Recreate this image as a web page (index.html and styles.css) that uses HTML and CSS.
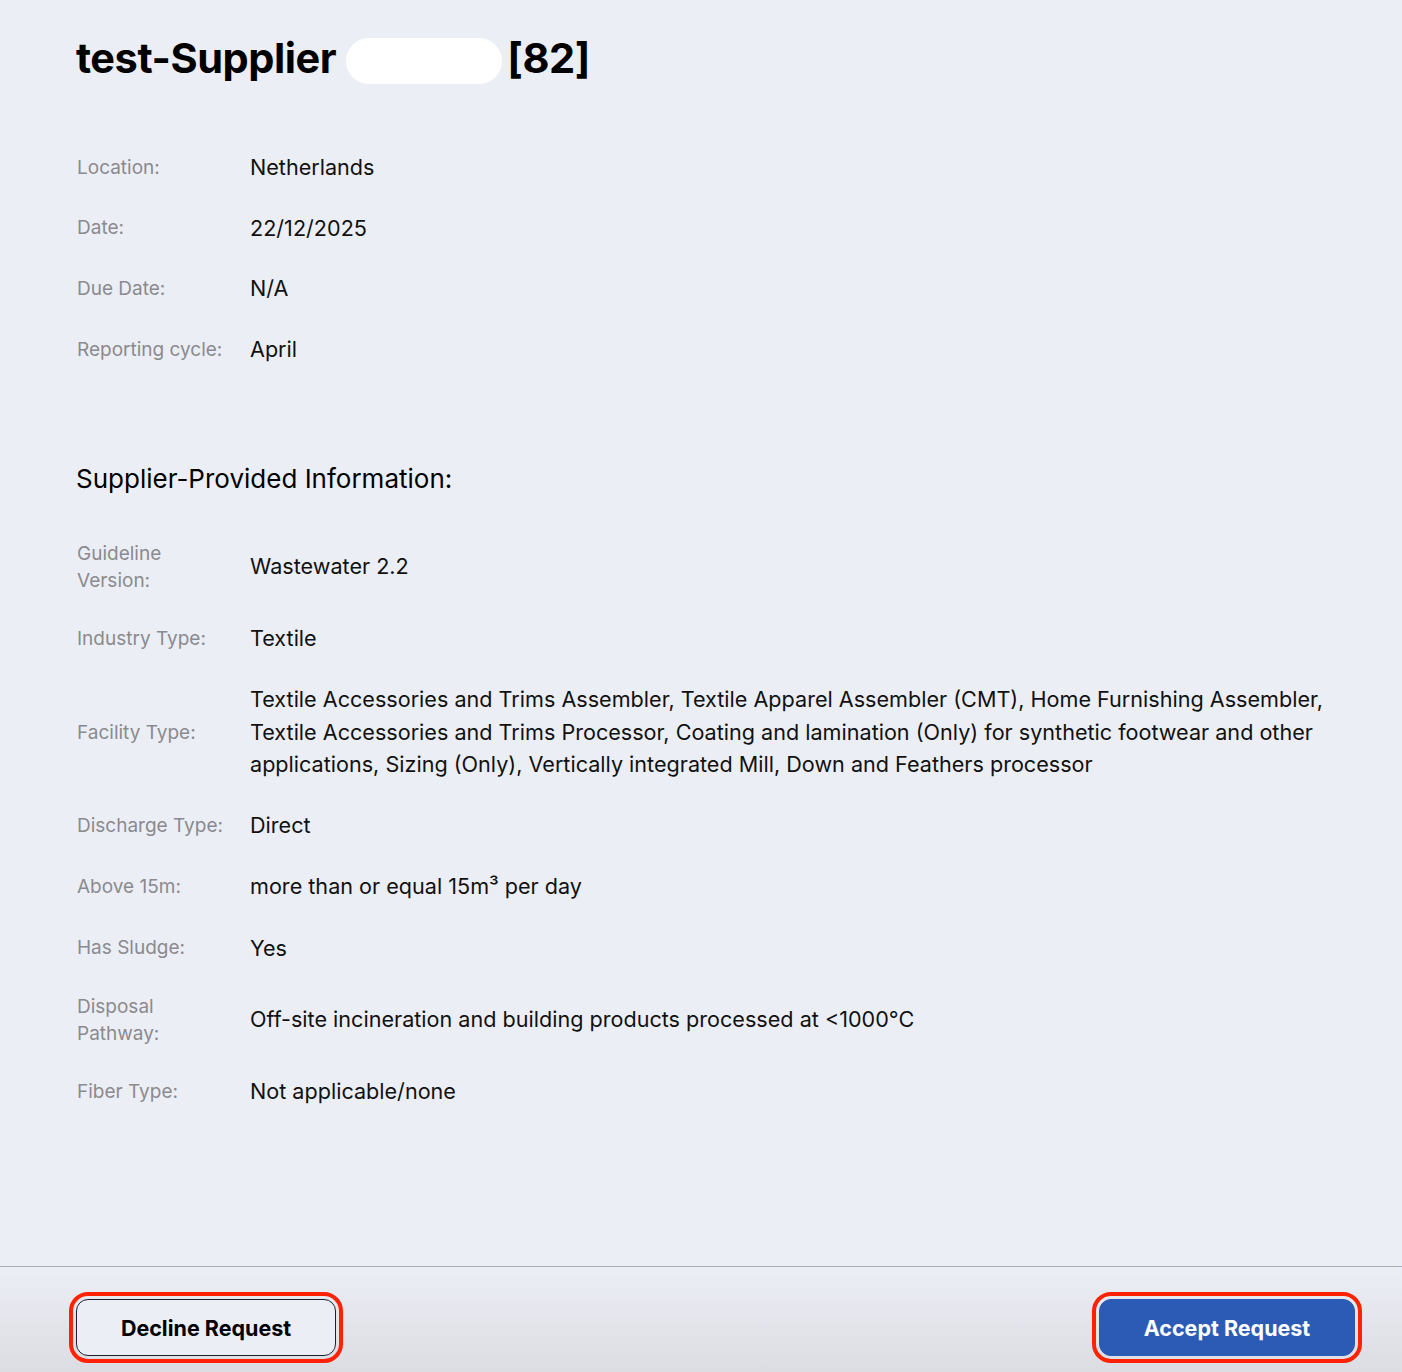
FILE: index.html
```html
<!DOCTYPE html>
<html lang="en">
<head>
<meta charset="utf-8">
<title>Supplier Request</title>
<link rel="stylesheet" href="styles.css">
</head>
<body>
<div class="page">
  <main class="content">
    <h1 class="title"><span>test-Supplier</span><span class="redact"></span><span>[82]</span></h1>

    <dl class="details details-top">
      <dt>Location:</dt><dd>Netherlands</dd>
      <dt>Date:</dt><dd>22/12/2025</dd>
      <dt>Due Date:</dt><dd>N/A</dd>
      <dt>Reporting cycle:</dt><dd>April</dd>
    </dl>

    <h2 class="section-title">Supplier-Provided Information:</h2>

    <dl class="details details-supplier">
      <dt>Guideline Version:</dt><dd>Wastewater 2.2</dd>
      <dt>Industry Type:</dt><dd>Textile</dd>
      <dt>Facility Type:</dt><dd>Textile Accessories and Trims Assembler, Textile Apparel Assembler (CMT), Home Furnishing Assembler, Textile Accessories and Trims Processor, Coating and lamination (Only) for synthetic footwear and other applications, Sizing (Only), Vertically integrated Mill, Down and Feathers processor</dd>
      <dt>Discharge Type:</dt><dd>Direct</dd>
      <dt>Above 15m:</dt><dd>more than or equal 15m³ per day</dd>
      <dt>Has Sludge:</dt><dd>Yes</dd>
      <dt>Disposal Pathway:</dt><dd>Off-site incineration and building products processed at &lt;1000°C</dd>
      <dt>Fiber Type:</dt><dd>Not applicable/none</dd>
    </dl>
  </main>

  <footer class="footer">
    <button class="btn btn-decline">Decline Request</button>
    <button class="btn btn-accept">Accept Request</button>
  </footer>
</div>
</body>
</html>
```

FILE: styles.css
```css
* { box-sizing: border-box; }

html, body {
  margin: 0;
  padding: 0;
  background: #eceef5;
}

body {
  font-family: Inter, "Noto Sans", "Liberation Sans", sans-serif;
  color: #111;
}

.page {
  min-height: 1372px;
  display: flex;
  flex-direction: column;
}

.content {
  flex: 1;
  padding: 30px 76px 0 76px;
}

.title {
  margin: 0;
  font-size: 41.5px;
  font-weight: 700;
  line-height: 56px;
  letter-spacing: -0.45px;
  color: #000;
  display: flex;
  align-items: center;
}

.redact {
  display: inline-block;
  width: 156px;
  height: 46px;
  margin: 6px 5px 0 10px;
  background: #fff;
  border-radius: 23px;
}

.details {
  display: grid;
  grid-template-columns: 174px 1fr;
  row-gap: 28.2px;
  align-items: center;
  margin: 0;
}

.details-supplier {
  row-gap: 28.6px;
}

.details-top {
  margin-top: 65px;
}

.details dt {
  font-size: 19px;
  line-height: 27px;
  color: #8a8a8f;
  padding: 0 22px 0 1px;
  margin: 0;
}

.details dd {
  margin: 0;
  font-size: 21.6px;
  line-height: 32.5px;
  color: #111;
}

.section-title {
  margin: 96px 0 44px 0;
  font-size: 26px;
  font-weight: 400;
  line-height: 34px;
  color: #000;
}

.footer {
  height: 106px;
  border-top: 1px solid #a9aebd;
  background: linear-gradient(#eceef5, #dcdde3);
  display: flex;
  justify-content: space-between;
  align-items: flex-start;
  padding: 32px 47px 0 76px;
}

.btn {
  font-family: Inter, "Noto Sans", "Liberation Sans", sans-serif;
  font-size: 21.5px;
  font-weight: 700;
  height: 57px;
  border-radius: 12px;
  outline: 4px solid #ff2200;
  outline-offset: 3px;
  cursor: pointer;
}

.btn-decline {
  width: 260px;
  background: #eceef5;
  border: 1px solid #1c2130;
  color: #000;
}

.btn-accept {
  width: 256px;
  background: #2c5bb5;
  border: 1px solid #2c5bb5;
  color: #fff;
}
```
